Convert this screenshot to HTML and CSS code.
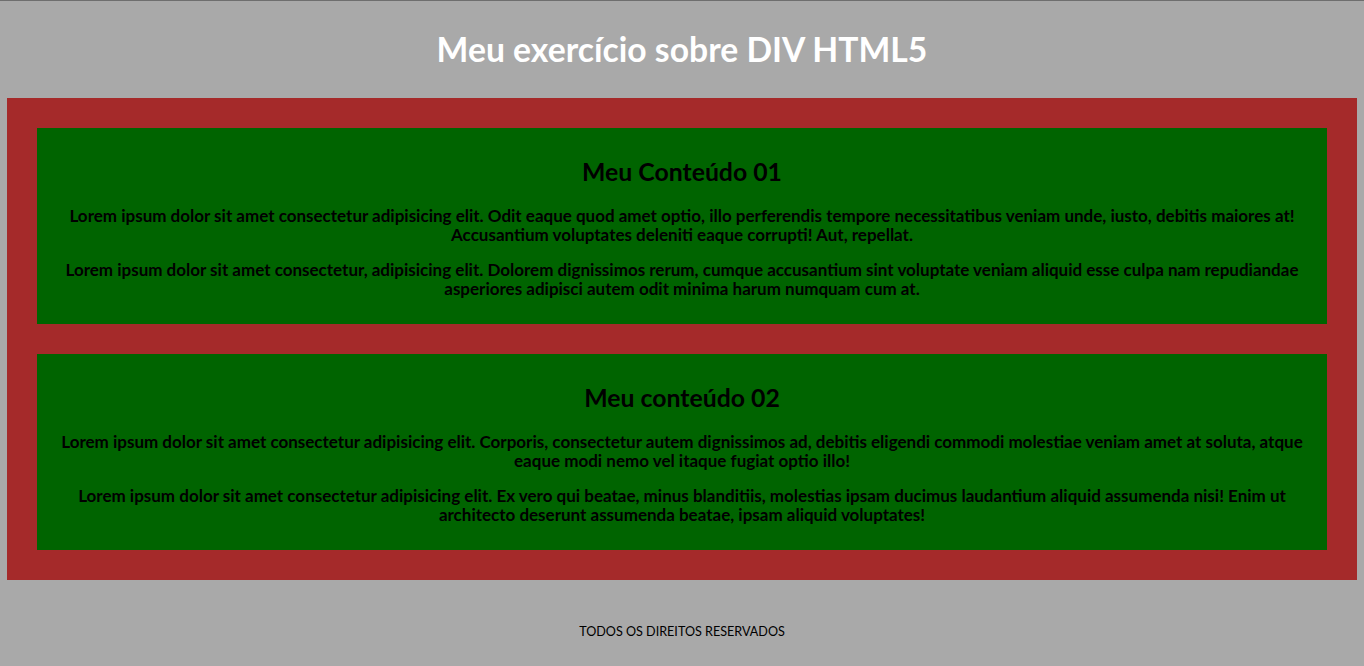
FILE: index.html
```html
<!DOCTYPE html>
<html lang="pt-BR">
<head>
<meta charset="utf-8">
<title>Meu exercício sobre DIV HTML5</title>
<link rel="stylesheet" href="styles.css">
</head>
<body>
<header class="topo">
  <h1 class="titulo">Meu exercício sobre DIV HTML5</h1>
</header>
<main class="principal">
  <section class="conteudo">
    <h2 class="subtitulo">Meu Conteúdo 01</h2>
    <p class="texto">Lorem ipsum dolor sit amet consectetur adipisicing elit. Odit eaque quod amet optio, illo perferendis tempore necessitatibus veniam unde, iusto, debitis maiores at! Accusantium voluptates deleniti eaque corrupti! Aut, repellat.</p>
    <p class="texto">Lorem ipsum dolor sit amet consectetur, adipisicing elit. Dolorem dignissimos rerum, cumque accusantium sint voluptate veniam aliquid esse culpa nam repudiandae asperiores adipisci autem odit minima harum numquam cum at.</p>
  </section>
  <section class="conteudo">
    <h2 class="subtitulo">Meu conteúdo 02</h2>
    <p class="texto">Lorem ipsum dolor sit amet consectetur adipisicing elit. Corporis, consectetur autem dignissimos ad, debitis eligendi commodi molestiae veniam amet at soluta, atque eaque modi nemo vel itaque fugiat optio illo!</p>
    <p class="texto">Lorem ipsum dolor sit amet consectetur adipisicing elit. Ex vero qui beatae, minus blanditiis, molestias ipsam ducimus laudantium aliquid assumenda nisi! Enim ut architecto deserunt assumenda beatae, ipsam aliquid voluptates!</p>
  </section>
</main>
<footer class="rodape">
  <p class="direitos">TODOS OS DIREITOS RESERVADOS</p>
</footer>
</body>
</html>
```
FILE: styles.css
```css
html, body {
  margin: 0;
  padding: 0;
}
body {
  background: #a9a9a9;
  border-top: 1px solid #6e6e6e;
  font-family: Lato, "Open Sans", sans-serif;
  color: #000;
}
.topo {
  padding: 30px 0 30px;
  text-align: center;
}
.titulo {
  margin: 0;
  font-size: 33.7px;
  line-height: 37px;
  font-weight: bold;
  color: #fff;
}
.principal {
  margin: 0 7px;
  padding: 30px;
  background: #a52a2a;
  display: flex;
  flex-direction: column;
  gap: 30px;
}
.conteudo {
  background: #006400;
  padding: 10px;
  text-align: center;
}
.subtitulo {
  margin: 20px 0;
  font-size: 24.8px;
  line-height: 28px;
  font-weight: bold;
}
.texto {
  margin: 0 0 16px;
  font-size: 17px;
  line-height: 19px;
  font-weight: bold;
}
.rodape {
  padding: 44px 0 0;
  text-align: center;
}
.direitos {
  margin: 0;
  font-size: 12.6px;
  line-height: 15px;
}
```
